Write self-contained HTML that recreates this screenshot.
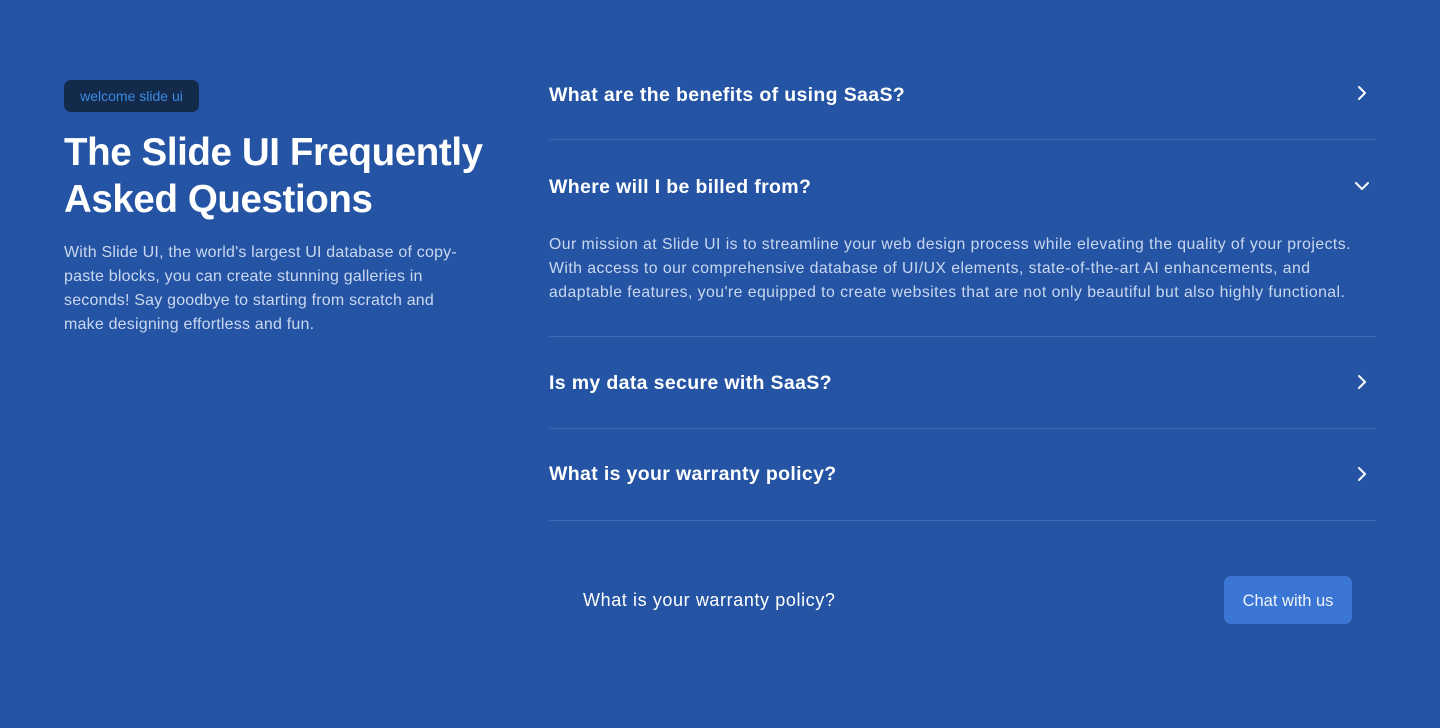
<!DOCTYPE html>
<html><head><style>
*{margin:0;padding:0;box-sizing:border-box}
body{width:1440px;height:728px;background:#2454a3;font-family:"Liberation Sans",sans-serif;color:#fff;position:relative;overflow:hidden}
.badge{position:absolute;left:64px;top:80px;width:135px;height:32px;background:#132a4b;border-radius:7px;color:#3b8ae6;font-size:14px;line-height:33px;text-align:center}
h1{position:absolute;left:64px;top:129px;width:440px;font-size:38.5px;line-height:47px;font-weight:700;letter-spacing:-0.4px}
.desc{position:absolute;left:64px;top:241px;width:440px;font-size:16px;line-height:24px;color:#c9d8f0;letter-spacing:0.2px}
.item{position:absolute;left:549px;width:827px;border-bottom:1px solid #3d6ab5}
.q{position:absolute;left:0;font-size:19.5px;font-weight:700;color:#fff;letter-spacing:0.35px}
.ic{position:absolute;right:6px}
.ans{position:absolute;left:549px;top:233px;width:860px;font-size:15.8px;line-height:24px;color:#c9d8f0;letter-spacing:0.45px}
.foot{position:absolute;left:583px;top:590px;font-size:18px;color:#fff;letter-spacing:0.6px}
.btn{position:absolute;left:1224px;top:576px;width:128px;height:48px;background:#3b76d4;border-radius:7px;font-size:16.5px;line-height:50px;text-align:center;color:#eef3fb}
</style></head><body>
<div class="badge">welcome slide ui</div>
<h1>The Slide UI Frequently Asked Questions</h1>
<div class="desc">With Slide UI, the world's largest UI database of copy-<br>paste blocks, you can create stunning galleries in<br>seconds! Say goodbye to starting from scratch and<br>make designing effortless and fun.</div>

<div class="item" style="top:60px;height:80px"><div class="q" style="top:24px">What are the benefits of using SaaS?</div>
<svg class="ic" style="top:25px" width="16" height="16" viewBox="0 0 16 16"><path d="M5 2l6 6-6 6" stroke="#fff" stroke-width="2" fill="none" stroke-linecap="round" stroke-linejoin="round"/></svg></div>

<div class="item" style="top:140px;height:197px"><div class="q" style="top:36px">Where will I be billed from?</div>
<svg class="ic" style="top:38px" width="16" height="16" viewBox="0 0 16 16"><path d="M2 5l6 6 6-6" stroke="#fff" stroke-width="2" fill="none" stroke-linecap="round" stroke-linejoin="round"/></svg></div>
<div class="ans">Our mission at Slide UI is to streamline your web design process while elevating the quality of your projects.<br>With access to our comprehensive database of UI/UX elements, state-of-the-art AI enhancements, and<br>adaptable features, you're equipped to create websites that are not only beautiful but also highly functional.</div>

<div class="item" style="top:337px;height:92px"><div class="q" style="top:35px">Is my data secure with SaaS?</div>
<svg class="ic" style="top:37px" width="16" height="16" viewBox="0 0 16 16"><path d="M5 2l6 6-6 6" stroke="#fff" stroke-width="2" fill="none" stroke-linecap="round" stroke-linejoin="round"/></svg></div>

<div class="item" style="top:429px;height:92px"><div class="q" style="top:34px">What is your warranty policy?</div>
<svg class="ic" style="top:37px" width="16" height="16" viewBox="0 0 16 16"><path d="M5 2l6 6-6 6" stroke="#fff" stroke-width="2" fill="none" stroke-linecap="round" stroke-linejoin="round"/></svg></div>

<div class="foot">What is your warranty policy?</div>
<div class="btn">Chat with us</div>
</body></html>
